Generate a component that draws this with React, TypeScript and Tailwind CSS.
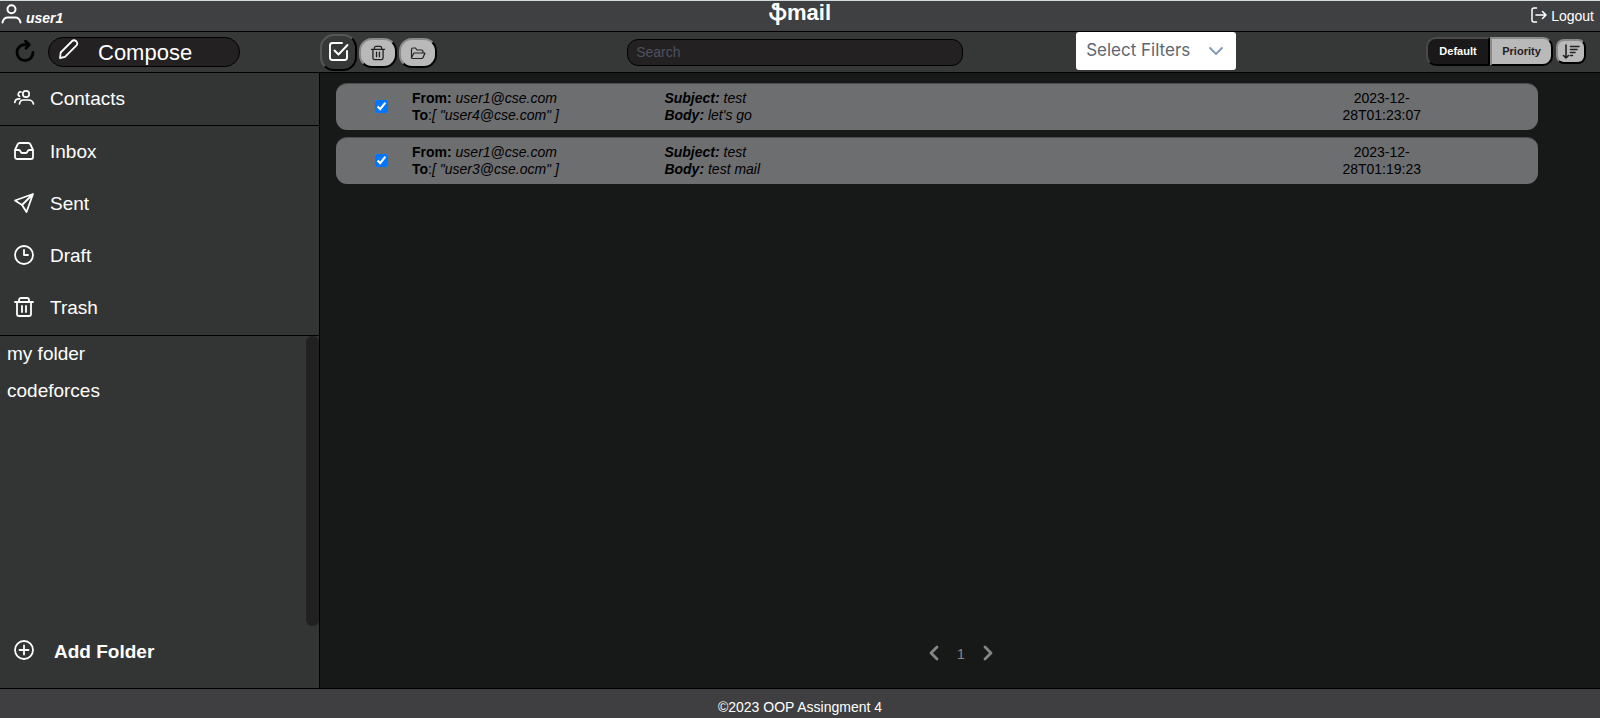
import React from "react";

const folders = ["my folder", "codeforces"];

const mails = [
  { id: 1, from: "user1@cse.com", to: "user4@cse.com", subject: "test", body: "let's go", date: "2023-12-28T01:23:07" },
  { id: 2, from: "user1@cse.com", to: "user3@cse.ocm", subject: "test", body: "test mail", date: "2023-12-28T01:19:23" },
];

export default function App() {
  return (
    <div className="flex min-h-screen flex-col border-t border-[#d3dada] bg-[#171918] font-['Liberation_Sans',Arial,sans-serif] text-white">
      <Header />
      <Toolbar />
      <div className="flex flex-1">
        <Sidebar />
        <main className="flex flex-1 flex-col pt-[10px]">
          <ul className="flex flex-col gap-[7px] pr-[62px] pl-4">
            {mails.map((mail) => (
              <MailRow key={mail.id} {...mail} />
            ))}
          </ul>
          <nav aria-label="Pages" className="mt-auto flex items-center justify-center pb-[23px] pl-[2px] text-[#858687]">
            <button type="button" aria-label="Previous page" className="p-1">
              <Icon box="0 0 16 16" className="h-4 w-4" width={2.8}>
                <path d="M11 2 5 8l6 6" />
              </Icon>
            </button>
            <span className="w-[30px] pt-[2px] text-center text-[14px]">1</span>
            <button type="button" aria-label="Next page" className="p-1">
              <Icon box="0 0 16 16" className="h-4 w-4" width={2.8}>
                <path d="m5 2 6 6-6 6" />
              </Icon>
            </button>
          </nav>
        </main>
      </div>
      <footer className="flex h-[30px] items-center justify-center border-t border-black bg-[#3f3f41] pt-2 text-[14px]">
        ©2023 OOP Assingment 4
      </footer>
    </div>
  );
}

function Header() {
  return (
    <header className="grid h-[31px] grid-cols-3 border-b border-black bg-[#3f4042]">
      <div className="flex items-center">
        <Icon box="0 0 24 24" className="h-6 w-6" width={2}>
          <circle cx="11.5" cy="5.200" r="4" />
          <path d="M2.500 18.500c.7-3.300 2.800-5 5.500-5h7c2.700 0 4.800 1.700 5.500 5" />
        </Icon>
        <span className="pt-1 pl-[2px] text-[14px] font-bold italic">user1</span>
      </div>
      <h1 className="text-center text-[22px] leading-6 font-bold">ֆmail</h1>
      <a href="#logout" className="flex items-center justify-self-end pr-[6px] text-[14px]">
        <Icon box="0 0 16 16" className="mr-1 mb-[2px] h-4 w-4" width={1.5}>
          <path d="M5.500 1H3a2 2 0 0 0-2 2v10a2 2 0 0 0 2 2h2.500M5 8h10M11.500 4.500 15 8l-3.500 3.500" />
        </Icon>
        Logout
      </a>
    </header>
  );
}

function Toolbar() {
  return (
    <div className="grid h-[41px] grid-cols-[20%_19.2%_28%_1fr] items-center border-b border-black bg-[#363837]">
      <div className="flex items-center pl-[14px]">
        <button type="button" aria-label="Refresh" className="text-black">
          <Icon box="0 0 22 24" className="h-6 w-[22px]" width={2.8}>
            <path d="M14 4.500H11a8 8 0 1 0 8 8" />
            <path d="m11.500 1 3.800 3.600-3.300 3.600" />
          </Icon>
        </button>
        <button type="button" className="ml-3 flex h-[30px] w-48 items-center rounded-full border border-black bg-[#242122] pl-[9px] text-[22px]">
          <Icon box="0 0 22 22" className="mr-[18px] mb-[6px] h-[22px] w-[22px]" width={1.8}>
            <path d="M2 20 2.700 14.500 14.200 3a2.600 2.600 0 0 1 3.700 0l.6.600a2.600 2.600 0 0 1 0 3.700L7 18.800z" />
          </Icon>
          Compose
        </button>
      </div>

      <div className="flex items-center gap-[2px]">
        <button type="button" aria-label="Select all" className="flex h-[37px] w-[37px] items-center justify-center rounded-[14px] border-2 border-t-[#565656] border-r-black border-b-black border-l-[#565656] bg-[#363837]">
          <Icon box="0 0 22 22" className="h-[22px] w-[22px]" width={1.9}>
            <path d="M14 2H4.500A2.500 2.500 0 0 0 2 4.500v12A2.500 2.500 0 0 0 4.500 19h12a2.500 2.500 0 0 0 2.500-2.500V10" />
            <path d="m6.500 9.500 4 4L19.500 4" />
          </Icon>
        </button>
        <GreyButton label="Delete">
          <TrashIcon className="h-4 w-4" />
        </GreyButton>
        <GreyButton label="Move to folder">
          <Icon box="0 0 16 16" className="h-4 w-4" width={1.2}>
            <path d="M1.500 12.500v-8a1.500 1.500 0 0 1 1.500-1.500h2.500l1.500 2h4.500a1.500 1.500 0 0 1 1.500 1.500v1" />
            <path d="M1.500 12.500 4 8h11l-2 4.500a1.500 1.500 0 0 1-1.500 1H2.500a1 1 0 0 1-1-1z" />
          </Icon>
        </GreyButton>
      </div>

      <input
        type="search"
        aria-label="Search"
        placeholder="Search"
        className="h-[27px] w-3/4 rounded-[11px] border border-black bg-[#242122] px-2 text-[14px] placeholder:text-[#4d5161]"
      />

      <div className="flex items-center justify-between pr-[14px] pl-px">
        <div className="relative mb-[2px]">
          <select aria-label="Select Filters" defaultValue="" className="block h-[38px] w-40 appearance-none rounded-[3px] bg-white pl-[10px] font-['Inter',sans-serif] text-[17px] text-[#5c6673]">
            <option value="">Select Filters</option>
          </select>
          <Icon box="0 0 16 16" className="pointer-events-none absolute top-[11px] right-3 h-4 w-4 text-[#8197b3]" width={1.8}>
            <path d="m2 5 6 6 6-6" />
          </Icon>
        </div>
        <div className="mb-px flex items-center text-[11px] font-bold">
          <button type="button" className="h-[29px] w-16 rounded-l-[10px] border-2 border-t-[#4a4a4a] border-r-black border-b-black border-l-[#4a4a4a] bg-[#1b1819]">
            Default
          </button>
          <button type="button" className="h-[29px] w-[63px] rounded-r-[10px] border-2 border-t-[#8a8a8a] border-r-black border-b-black border-l-[#8a8a8a] bg-[#b9b9b9] text-[#242122]">
            Priority
          </button>
          <button type="button" aria-label="Sort" className="ml-[3px] flex h-[25px] w-[30px] items-center justify-center rounded-lg border-2 border-t-[#8a8a8a] border-r-black border-b-black border-l-[#8a8a8a] bg-[#b9b9b9] text-[#242122]">
            <Icon box="0 0 18 16" className="h-4 w-[18px]" width={1.6}>
              <path d="M4 1v13M1.500 11.500 4 14l2.500-2.500M8.500 2.500H17M8.500 5.500h6.500M8.500 8.500H13M8.500 11.500h2" />
            </Icon>
          </button>
        </div>
      </div>
    </div>
  );
}

function Sidebar() {
  return (
    <aside className="flex w-1/5 flex-col border-r border-black bg-[#333534] text-[19px]">
      <div className="border-b border-black">
        <NavItem label="Contacts">
          <Icon box="0 0 22 22" className="h-[22px] w-[22px]" width={1.7}>
            <circle cx="13" cy="7" r="3.200" />
            <path d="M6.500 17c.3-2.800 1.800-4 4-4h5c2.500 0 4.500 1.500 5 4" />
            <path d="M8 5a2.300 2.300 0 0 0-1.500 4.300M1.800 15.500c.2-2.300 1.200-3.500 3.500-3.700h1.500" />
          </Icon>
        </NavItem>
      </div>
      <nav aria-label="Mailboxes" className="border-b border-black pb-px">
        <NavItem label="Inbox">
          <Icon box="0 0 22 22" className="h-[22px] w-[22px]">
            <path d="M6.500 3h9a2 2 0 0 1 1.700 1l2.800 6v7a2 2 0 0 1-2 2H4a2 2 0 0 1-2-2v-7L4.800 4A2 2 0 0 1 6.500 3z" />
            <path d="M2.500 10H6c1.500 0 1.500 3 3 3h4c1.500 0 1.500-3 3-3h3.500" />
          </Icon>
        </NavItem>
        <NavItem label="Sent">
          <Icon box="0 0 22 22" className="h-[22px] w-[22px]">
            <path d="M20 2 2 8.500l7 4.500 4.500 7zM20 2 9 13" />
          </Icon>
        </NavItem>
        <NavItem label="Draft">
          <Icon box="0 0 22 22" className="h-[22px] w-[22px]">
            <circle cx="11" cy="11" r="9" />
            <path d="M11 6v5h4" />
          </Icon>
        </NavItem>
        <NavItem label="Trash">
          <TrashIcon className="h-[22px] w-[22px]" />
        </NavItem>
      </nav>
      <div className="flex h-[290px] justify-between">
        <ul>
          {folders.map((folder) => (
            <li key={folder} className="h-[37px]">
              <a href="#folder" className="flex h-full items-center pl-[7px]">
                {folder}
              </a>
            </li>
          ))}
        </ul>
        <div className="w-[13px] rounded-md bg-[#222121]" />
      </div>
      <button type="button" className="flex h-[52px] items-center pl-[13px] font-bold">
        <Icon box="0 0 22 22" className="mr-[19px] mb-1 h-[22px] w-[22px]" width={1.8}>
          <circle cx="11" cy="11" r="9" />
          <path d="M11 6.500v9M6.500 11h9" />
        </Icon>
        Add Folder
      </button>
    </aside>
  );
}

function NavItem({ label, children }: { label: string; children: React.ReactNode }) {
  return (
    <a href="#mailbox" className="flex h-[52px] items-center gap-[15px] pl-[13px]">
      <span className="mb-[3px]">{children}</span>
      {label}
    </a>
  );
}

interface MailProps {
  from: string;
  to: string;
  subject: string;
  body: string;
  date: string;
}

function MailRow(props: Readonly<MailProps>) {
  return (
    <li className="grid h-[47px] grid-cols-[76px_21%_1fr_26%] items-center rounded-[11px] border-t border-[#4b4c4d] bg-[#6d6e70] text-[14px] leading-[17px] text-black">
      <input type="checkbox" defaultChecked aria-label={"Select " + props.subject} className="mb-px ml-[39px] h-[13px] w-[13px]" />
      <div>
        <div>
          <b>From:</b> <i>{props.from}</i>
        </div>
        <div>
          <b>To</b>:<i>[ "{props.to}" ]</i>
        </div>
      </div>
      <div className="italic">
        <div>
          <b>Subject:</b> {props.subject}
        </div>
        <div>
          <b>Body:</b> {props.body}
        </div>
      </div>
      <time className="w-24 justify-self-center text-center">{props.date}</time>
    </li>
  );
}

function GreyButton({ label, children }: { label: string; children: React.ReactNode }) {
  return (
    <button
      type="button"
      aria-label={label}
      className="mt-[2px] flex h-[30px] w-[38px] items-center justify-center rounded-[13px] border-2 border-t-[#8a8a8a] border-r-black border-b-black border-l-[#8a8a8a] bg-[#b9b9b9] text-[#242122]"
    >
      {children}
    </button>
  );
}

function TrashIcon({ className }: { className: string }) {
  return (
    <Icon box="0 0 22 22" className={className}>
      <path d="M2 6h18M6 6V4a2 2 0 0 1 2-2h6a2 2 0 0 1 2 2v2M4 6v12a2 2 0 0 0 2 2h10a2 2 0 0 0 2-2V6M9 10v6M13 10v6" />
    </Icon>
  );
}

interface IconProps {
  box: string;
  className: string;
  width?: number;
  children: React.ReactNode;
}

function Icon({ box, className, width = 1.8, children }: IconProps) {
  return (
    <svg
      viewBox={box}
      className={className}
      fill="none"
      stroke="currentColor"
      strokeWidth={width}
      strokeLinecap="round"
      strokeLinejoin="round"
      aria-hidden="true"
    >
      {children}
    </svg>
  );
}
